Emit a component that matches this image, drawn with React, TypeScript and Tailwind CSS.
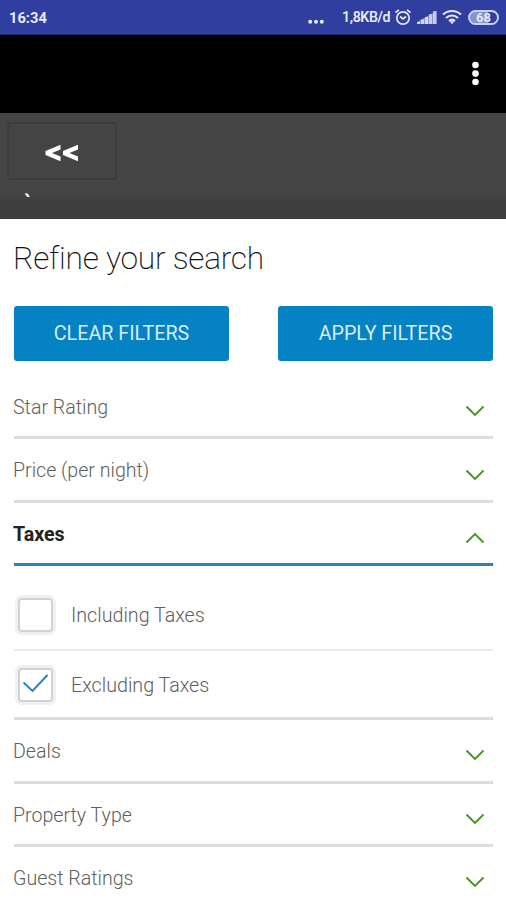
import React from "react";

function Chevron({ up = false }: { up?: boolean }) {
  return (
    <svg width="20" height="12" viewBox="0 0 20 12" fill="none" className={up ? "mt-[9px] mr-2 rotate-180" : "mt-[8px] mr-2"}>
      <path d="M1.5 1.5 10 10l8.500-8.500" stroke="#47941f" strokeWidth="1.900" />
    </svg>
  );
}

function Section({ label, open = false }: { label: string; open?: boolean }) {
  return (
    <button
      className={
        "flex h-[63.4px] w-full shrink-0 items-center justify-between border-b-[3px] pt-[2px] text-left text-[19.600px] leading-6 " +
        (open ? "border-[#2f7fb8] font-bold text-[#222]" : "border-[#dcdcdc] font-light text-[#606060]")
      }
    >
      <span className="-ml-px pt-[1.500px] whitespace-nowrap">{label}</span>
      <Chevron up={open} />
    </button>
  );
}

function Option({ label, checked = false }: { label: string; checked?: boolean }) {
  return (
    <label className="flex items-center text-[19.700px] leading-6 font-light text-[#606060]">
      <span className="ml-1 flex h-[34px] w-[35px] items-center justify-center rounded-[4px] border-2 border-[#d2d2d2] bg-white shadow-[0_0_0_3px_#f0f0f0]">
        {checked && (
          <svg width="27" height="20" viewBox="0 0 27 20" fill="none" className="-mt-[3px]">
            <path d="m1.500 9.500 9 8.500L25.500 2" stroke="#1d83c5" strokeWidth="1.900" />
          </svg>
        )}
      </span>
      <span className="ml-[18px] pt-[2px] whitespace-nowrap">{label}</span>
    </label>
  );
}

function StatusBar() {
  return (
    <div className="flex h-[35px] shrink-0 items-center border-b border-[#1b2769] bg-[#303f9f] pl-[9px] text-[#e6e9fa]">
      <span className="w-[298px] pt-[3px] text-[14.700px] font-bold">16:34</span>
      <svg width="18" height="6" viewBox="0 0 18 6" fill="currentColor" className="mt-[9px]">
        <circle cx="3.200" cy="2.800" r="2" />
        <circle cx="9" cy="2.800" r="2" />
        <circle cx="14.800" cy="2.800" r="2" />
      </svg>
      <span className="ml-[17px] w-[51px] pt-[2px] text-[14.200px] font-semibold tracking-[-0.400px] whitespace-nowrap">1,8KB/d</span>
      <svg width="18" height="18" viewBox="0 0 18 18" fill="none" stroke="currentColor" strokeWidth="1.700" className="ml-px">
        <circle cx="9" cy="10" r="6.200" />
        <path d="M1.500 4.500 5 1.800M16.500 4.500 13 1.800M6 8.500l3 2.500 3-2.500" />
      </svg>
      <svg width="20" height="15" viewBox="0 0 20 15" fill="currentColor" className="ml-[5px]">
        <path d="M0 14v-2h3v2zM4 14v-4.500h3V14zM8 14V7h3v7z" opacity=".8" />
        <path d="M12 14V4h3v10zM16 14V1h3.500v13z" opacity=".65" />
        <path d="M0 14V12L19.500 1v13z" opacity=".5" />
      </svg>
      <svg width="20" height="16" viewBox="0 0 20 16" fill="none" stroke="currentColor" strokeWidth="2" className="ml-[5px]">
        <path d="M1 5.500C6 .8 14 .8 19 5.500M4 9c3.500-3.300 8.500-3.300 12 0M7 12c2-1.800 4-1.800 6 0" />
        <path d="m7.500 12.300 2.500 3 2.500-3z" fill="currentColor" stroke="none" />
      </svg>
      <span className="ml-[6px] flex h-[15px] w-[31px] items-center justify-center rounded-full border-2 border-[#cbd0ee] bg-[linear-gradient(90deg,#8792cc_0_66%,#303f9f_66%)] pt-px text-[13px] leading-none font-bold">
        68
      </span>
    </div>
  );
}

export default function App() {
  return (
    <div className="flex h-[900px] w-[506px] flex-col overflow-hidden bg-white font-['Roboto',sans-serif]">
      <StatusBar />
      <div className="flex h-[78px] shrink-0 items-center justify-end bg-black pr-[26px]">
        <svg width="9" height="26" viewBox="0 0 9 26" fill="white">
          <circle cx="4.500" cy="4" r="3.300" />
          <circle cx="4.500" cy="12.600" r="3.300" />
          <circle cx="4.500" cy="21" r="3.300" />
        </svg>
      </div>
      <header className="h-[106px] shrink-0 border-b border-[#383838] bg-[linear-gradient(#454545_0_75%,#3e3e3e_85%)] pt-[9px] pl-[7px]">
        <button className="flex h-[58px] w-[110px] items-center justify-center rounded-[3px] border-2 border-[#3c3c3c] bg-[#444] pt-[3px]">
          <svg width="34" height="18" viewBox="0 0 34 18" fill="white">
            <path d="M15.500 .8v4.700L7 9l8.500 3.500v4.700L.500 11V7zM33 .8v4.700L24.500 9l8.500 3.500v4.700L18 11V7z" />
          </svg>
        </button>
        <div className="mt-[11px] ml-[17px] h-6 text-[22px] leading-6 font-medium text-white">`</div>
      </header>
      <main className="flex grow flex-col pr-[13px] pl-[14px]">
        <h1 className="mt-[20px] -ml-px h-10 text-[31.700px] leading-10 font-extralight tracking-[-0.260px] whitespace-nowrap text-[#111]">Refine your search</h1>
        <div className="mt-[27px] flex h-[55px] shrink-0 justify-between text-[19.700px] font-normal text-[#d8edfa]">
          <button className="w-[215px] rounded-[3px] bg-[#0482c3] pt-px">CLEAR FILTERS</button>
          <button className="w-[215px] rounded-[3px] bg-[#0482c3] pt-px">APPLY FILTERS</button>
        </div>
        <div className="mt-[15px] flex shrink-0 flex-col">
          <Section label="Star Rating" />
          <Section label="Price (per night)" />
          <Section label="Taxes" open />
          <div className="flex h-[84.500px] items-center border-b-2 border-[#e9e9e9] pt-[15px]">
            <Option label="Including Taxes" />
          </div>
          <div className="flex h-[69.500px] items-center border-b-[3px] border-[#dcdcdc] pt-[2px]">
            <Option label="Excluding Taxes" checked />
          </div>
          <Section label="Deals" />
          <Section label="Property Type" />
          <Section label="Guest Ratings" />
        </div>
      </main>
    </div>
  );
}
